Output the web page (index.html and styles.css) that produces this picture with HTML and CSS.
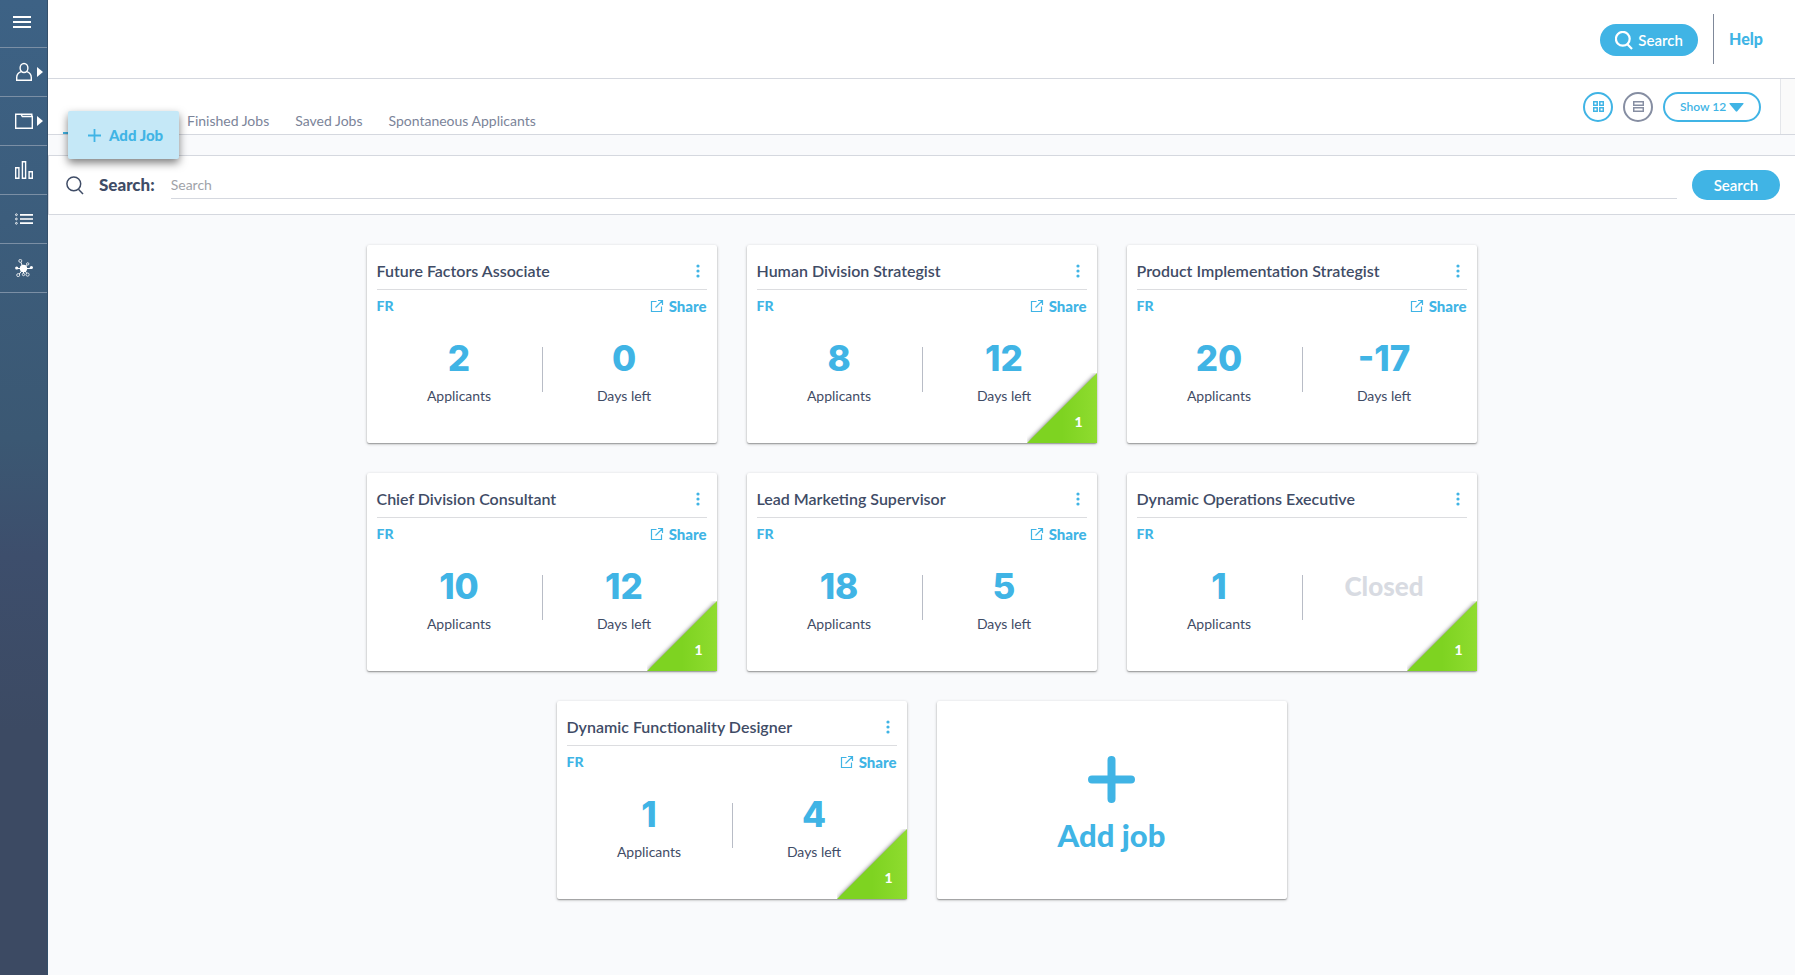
FILE: index.html
```html
<!DOCTYPE html>
<html lang="en">
<head>
<meta charset="utf-8">
<title>Jobs</title>
<link rel="stylesheet" href="styles.css">
</head>
<body>
<svg class="sprite" aria-hidden="true">
  <defs><linearGradient id="green"><stop offset="0" stop-color="#7ed321"/><stop offset="0.5" stop-color="#7ed321"/><stop offset="1" stop-color="#8fdc2f"/></linearGradient></defs>
  <symbol id="i-search" viewBox="0 0 18 19"><circle cx="7.8" cy="7.8" r="6.9"/><path d="M12.4 13.2L17 18"/></symbol>
  <symbol id="i-share" viewBox="0 0 14 14"><path d="M6.500 2.500H1.500V12.500H11.500V7.500M5.500 8.500L12.500 1.500M8 1.500H12.500V6"/></symbol>
  <symbol id="i-dots" viewBox="0 0 4 14"><circle cx="2" cy="2" r="1.600"/><circle cx="2" cy="7" r="1.600"/><circle cx="2" cy="12" r="1.600"/></symbol>
  <symbol id="i-corner" viewBox="0 0 70 70"><path d="M70 0V70H0Z" fill="url(#green)"/></symbol>
</svg>

<div class="app">
  <nav class="side" aria-label="Main">
    <button class="side-item side-menu" aria-label="Menu"><svg width="18" height="12" viewBox="0 0 18 12"><path d="M0 1H18M0 6H18M0 11H18" stroke="#fff" stroke-width="2"/></svg></button>
    <a class="side-item" href="#people" aria-label="People"><svg width="28" height="20" viewBox="0 0 28 20"><g fill="none" stroke="#fff" stroke-width="1.400"><ellipse cx="9" cy="6" rx="3.900" ry="4.500"/><path d="M6.300 9.600C3.400 10.600 1.700 12.500 1.700 15.500V18.300H16.300V15.500C16.300 12.500 14.600 10.600 11.700 9.600"/></g><path d="M22 5L28 10L22 15Z" fill="#fff"/></svg></a>
    <a class="side-item" href="#jobs" aria-label="Jobs"><svg width="28" height="20" viewBox="0 0 28 20"><g fill="none" stroke="#fff" stroke-width="1.400"><path d="M.7 3.200H6L7.300 5.500H17.300V17.300H.7ZM6.500 3.200H16.800V5.500"/></g><path d="M22 5L28 10L22 15Z" fill="#fff"/></svg></a>
    <a class="side-item" href="#stats" aria-label="Statistics"><svg width="18" height="18" viewBox="0 0 18 18"><path d="M.7 6.700H3.900V17.300H.7ZM7.400.7H10.600V17.300H7.400ZM14.100 10.700H17.300V17.300H14.100Z" fill="none" stroke="#fff" stroke-width="1.400"/></svg></a>
    <a class="side-item" href="#list" aria-label="Lists"><svg width="18" height="12" viewBox="0 0 18 12"><path d="M5 1.800H18M5 6H18M5 10.200H18" stroke="#fff" stroke-width="1.700"/><g fill="none" stroke="#fff" stroke-width=".9"><circle cx="1.400" cy="1.700" r=".9"/><circle cx="1.400" cy="6" r=".9"/><circle cx="1.400" cy="10.300" r=".9"/></g></svg></a>
    <a class="side-item" href="#network" aria-label="Network"><svg width="18" height="18" viewBox="0 0 18 18"><path d="M8.500 9.500L5.500 2.500M8.500 9.500L12.500 5M8.500 9.500H16.500M8.500 9.500H1.500M8.500 9.500L3.500 16M8.500 9.500V15M8.500 9.500L12.500 15.500" stroke="#fff"/><circle cx="8.500" cy="9.500" r="3.700" fill="#fff"/><circle cx="1.700" cy="9" r="1.600" fill="#fff"/><circle cx="16.400" cy="8.500" r="1.600" fill="#fff"/><g fill="#3d5e7d" stroke="#fff" stroke-width=".8"><circle cx="5.300" cy="1.900" r="1.500"/><circle cx="12.700" cy="4.900" r="1.200"/><circle cx="3.200" cy="16.100" r="1.500"/><circle cx="8.500" cy="15.500" r="1.200"/><circle cx="12.600" cy="15.600" r="1.600"/></g></svg></a>
  </nav>

  <main class="main">
    <header class="top">
      <button class="pill top-search"><svg class="line bold" width="18" height="19"><use href="#i-search"/></svg>Search</button>
      <a class="help" href="#help">Help</a>
    </header>

    <div class="toolbar-row">
      <div class="toolbar">
        <div class="tabs">
          <span class="tab current"></span>
          <a class="tab" href="#finished">Finished Jobs</a>
          <a class="tab" href="#saved">Saved Jobs</a>
          <a class="tab" href="#spontaneous">Spontaneous Applicants</a>
        </div>
        <div class="views">
          <button class="round" aria-label="Grid view"><svg width="11" height="11" viewBox="0 0 11 11"><path d="M.7.7H4.200V4.200H.7ZM6.800.7H10.300V4.200H6.800ZM.7 6.800H4.200V10.300H.7ZM6.800 6.800H10.300V10.300H6.800Z"/></svg></button>
          <button class="round muted" aria-label="List view"><svg width="11" height="11" viewBox="0 0 11 11"><path d="M.7.7H10.300V4.200H.7ZM.7 6.800H10.300V10.300H.7Z"/></svg></button>
          <div class="show"><select aria-label="Jobs per page"><option>Show 12</option></select><svg width="15" height="9" viewBox="0 0 15 9"><path d="M1 0H14Q15 0 14.400 1L8.300 8.300Q7.500 9 6.700 8.300L.6 1Q0 0 1 0Z" fill="#40b4e5"/></svg></div>
        </div>
      </div>
    </div>

    <form class="filter">
      <svg class="line" width="18" height="19"><use href="#i-search"/></svg>
      <label for="q">Search:</label>
      <input id="q" type="text" placeholder="Search">
      <button class="pill" type="button">Search</button>
    </form>

    <section class="cards">
      <article class="card">
        <div class="card-head"><h2>Future Factors Associate</h2><button class="dots" aria-label="Options"><svg width="4" height="14"><use href="#i-dots"/></svg></button></div>
        <div class="meta"><span>FR</span><a class="share" href="#share"><svg width="14" height="14"><use href="#i-share"/></svg>Share</a></div>
        <div class="stats"><div class="stat"><strong>2</strong>Applicants</div><div class="stat"><strong>0</strong>Days left</div></div>
      </article>
      <article class="card">
        <div class="card-head"><h2>Human Division Strategist</h2><button class="dots" aria-label="Options"><svg width="4" height="14"><use href="#i-dots"/></svg></button></div>
        <div class="meta"><span>FR</span><a class="share" href="#share"><svg width="14" height="14"><use href="#i-share"/></svg>Share</a></div>
        <div class="stats"><div class="stat"><strong>8</strong>Applicants</div><div class="stat"><strong>12</strong>Days left</div></div>
        <div class="corner"><svg width="70" height="70"><use href="#i-corner"/></svg><span>1</span></div>
      </article>
      <article class="card">
        <div class="card-head"><h2>Product Implementation Strategist</h2><button class="dots" aria-label="Options"><svg width="4" height="14"><use href="#i-dots"/></svg></button></div>
        <div class="meta"><span>FR</span><a class="share" href="#share"><svg width="14" height="14"><use href="#i-share"/></svg>Share</a></div>
        <div class="stats"><div class="stat"><strong>20</strong>Applicants</div><div class="stat"><strong>-17</strong>Days left</div></div>
      </article>
      <article class="card">
        <div class="card-head"><h2>Chief Division Consultant</h2><button class="dots" aria-label="Options"><svg width="4" height="14"><use href="#i-dots"/></svg></button></div>
        <div class="meta"><span>FR</span><a class="share" href="#share"><svg width="14" height="14"><use href="#i-share"/></svg>Share</a></div>
        <div class="stats"><div class="stat"><strong>10</strong>Applicants</div><div class="stat"><strong>12</strong>Days left</div></div>
        <div class="corner"><svg width="70" height="70"><use href="#i-corner"/></svg><span>1</span></div>
      </article>
      <article class="card">
        <div class="card-head"><h2>Lead Marketing Supervisor</h2><button class="dots" aria-label="Options"><svg width="4" height="14"><use href="#i-dots"/></svg></button></div>
        <div class="meta"><span>FR</span><a class="share" href="#share"><svg width="14" height="14"><use href="#i-share"/></svg>Share</a></div>
        <div class="stats"><div class="stat"><strong>18</strong>Applicants</div><div class="stat"><strong>5</strong>Days left</div></div>
      </article>
      <article class="card">
        <div class="card-head"><h2>Dynamic Operations Executive</h2><button class="dots" aria-label="Options"><svg width="4" height="14"><use href="#i-dots"/></svg></button></div>
        <div class="meta"><span>FR</span></div>
        <div class="stats"><div class="stat"><strong>1</strong>Applicants</div><div class="stat"><strong class="closed">Closed</strong></div></div>
        <div class="corner"><svg width="70" height="70"><use href="#i-corner"/></svg><span>1</span></div>
      </article>
      <article class="card">
        <div class="card-head"><h2>Dynamic Functionality Designer</h2><button class="dots" aria-label="Options"><svg width="4" height="14"><use href="#i-dots"/></svg></button></div>
        <div class="meta"><span>FR</span><a class="share" href="#share"><svg width="14" height="14"><use href="#i-share"/></svg>Share</a></div>
        <div class="stats"><div class="stat"><strong>1</strong>Applicants</div><div class="stat"><strong>4</strong>Days left</div></div>
        <div class="corner"><svg width="70" height="70"><use href="#i-corner"/></svg><span>1</span></div>
      </article>
      <button class="card add"><svg width="47" height="47" viewBox="0 0 47 47"><path d="M23.500 4V43M4 23.500H43" stroke="#40b4e5" stroke-width="8" stroke-linecap="round"/></svg>Add job</button>
    </section>
  </main>

  <a class="flyout" href="#add"><svg width="13" height="13" viewBox="0 0 13 13"><path d="M6.500 0V13M0 6.500H13" stroke="#40b4e5" stroke-width="1.800"/></svg>Add Job</a>
</div>
</body>
</html>
```
FILE: styles.css
```css
* { box-sizing: border-box; }
body {
  margin: 0;
  background: #f9fafc;
  color: #3f4c66;
  font: 14px/20px Lato, "Open Sans", sans-serif;
}
button, input, select { font: inherit; color: inherit; border: 0; background: none; padding: 0; margin: 0; }
a { color: inherit; text-decoration: none; }
svg { display: block; flex: none; }
.sprite { position: absolute; width: 0; height: 0; }
.line { fill: none; stroke: #3f4c66; stroke-width: 1.5; }
.line.bold { stroke: #fff; stroke-width: 2.2; }

.app { display: flex; min-height: 100vh; position: relative; }
.side {
  width: 48px;
  flex: none;
  background: linear-gradient(#3d6285 0, #3b5873 45%, #3d4e6c 57%, #3c4a63 75%);
  border-right: 1px solid #34506b;
}
.side-item {
  display: flex;
  align-items: center;
  width: 100%;
  height: 49px;
  padding-left: 15px;
  border-bottom: 1px solid #7b8fa5;
}
.side-menu { height: 48px; padding: 0 0 4px 13px; }
.main { flex: 1; min-width: 0; }

.top {
  height: 79px;
  display: flex;
  justify-content: flex-end;
  align-items: center;
  padding-right: 32px;
  background: #fff;
  border-bottom: 1px solid #d5d8df;
}
.pill {
  display: flex;
  align-items: center;
  justify-content: center;
  height: 30px;
  width: 88px;
  border-radius: 16px;
  background: #40b4e5;
  color: #fff;
  font-size: 15px;
  font-weight: 600;
}
.top-search { width: 98px; height: 32px; margin-top: 2px; gap: 5px; }
.help {
  margin-left: 15px;
  padding-left: 15px;
  line-height: 50px;
  border-left: 1px solid #7f8899;
  color: #40b4e5;
  font-size: 16px;
  font-weight: 900;
}

.toolbar-row {
  padding-right: 14px;
  background: #fafafa;
  border-bottom: 1px solid #d5d8df;
}
.toolbar {
  display: flex;
  justify-content: space-between;
  height: 55px;
  padding: 0 19px 0 15px;
  background: #fff;
  border-right: 1px solid #e4e6ea;
}
.tabs { display: flex; gap: 26px; align-items: flex-end; color: #7b8499; }
.tab { padding-bottom: 3px; }
.tab.current { width: 98px; height: 2px; padding: 0; background: #40b4e5; }
.views { display: flex; align-items: center; gap: 10px; }
.round {
  width: 30px;
  height: 30px;
  display: flex;
  align-items: center;
  justify-content: center;
  border: 2px solid #40b4e5;
  border-radius: 50%;
  color: #40b4e5;
}
.round.muted { border-color: #868ea2; color: #868ea2; }
.round svg { fill: none; stroke: currentColor; stroke-width: 1.5; }
.show {
  position: relative;
  width: 98px;
  height: 30px;
  border: 2px solid #40b4e5;
  border-radius: 15px;
  color: #40b4e5;
}
.show select { appearance: none; width: 100%; height: 100%; padding-left: 15px; font-size: 12px; font-weight: 600; outline: 0; }
.show svg { position: absolute; right: 15px; top: 9px; pointer-events: none; }

.filter {
  display: flex;
  align-items: center;
  height: 60px;
  margin-top: 20px;
  padding: 0 15px 0 17px;
  background: #fff;
  border: 1px solid #d5d8df;
  border-right: 0;
}
.filter label { margin: 0 16px 0 15px; font-size: 17px; font-weight: 900; }
.filter input {
  flex: 1;
  min-width: 0;
  height: 28px;
  margin-right: 15px;
  border-bottom: 1px solid #d5d8df;
  outline: 0;
}
.filter input::placeholder { color: #a0a3a9; opacity: 1; }

.cards {
  display: flex;
  flex-wrap: wrap;
  justify-content: center;
  gap: 30px;
  max-width: 1201px;
  margin: 0 auto;
  padding: 30px 0;
}
.card {
  position: relative;
  width: 350px;
  height: 198px;
  padding: 10px;
  background: #fff;
  border-radius: 2px;
  box-shadow: 0 1px 3px rgba(0, 0, 0, .3), 0 1px 1px rgba(0, 0, 0, .2);
}
.card-head {
  display: flex;
  align-items: center;
  justify-content: space-between;
  height: 35px;
  padding-bottom: 2px;
  border-bottom: 1px solid #dcdde0;
}
h2 { margin: 0; font-size: 16px; line-height: 24px; font-weight: 600; }
.dots { padding: 0 7px; fill: #40b4e5; }
.meta {
  display: flex;
  align-items: center;
  justify-content: space-between;
  height: 32px;
  color: #40b4e5;
  font-weight: 900;
}
.share { display: flex; align-items: center; gap: 5px; font-size: 15px; }
.share svg { fill: none; stroke: #40b4e5; stroke-width: 1.2; }
.stats { display: flex; padding-top: 16px; }
.stat { flex: 1; display: flex; flex-direction: column; align-items: center; }
.stat strong {
  width: 100%;
  height: 48px;
  color: #40b4e5;
  font: 800 35px/40px Inter, sans-serif;
  text-align: center;
}
.stat + .stat {
  background: linear-gradient(#b8bcc6, #b8bcc6) no-repeat 0 9px / 1px 45px;
}
.stat strong.closed { color: #d8dbe2; font: 900 26px/40px Lato, sans-serif; }
.corner { position: absolute; right: 0; bottom: 0; overflow: hidden; }
.corner svg { overflow: visible; filter: drop-shadow(0 0 2px rgba(0, 0, 0, .6)); }
.corner span { position: absolute; right: 14px; bottom: 11px; color: #fff; font-weight: 900; }
.add {
  display: flex;
  flex-direction: column;
  align-items: center;
  justify-content: center;
  gap: 14px;
  padding-top: 18px;
  color: #40b4e5;
  font-size: 31px;
  line-height: 36px;
  font-weight: 900;
}

.flyout {
  position: absolute;
  left: 68px;
  top: 111px;
  display: flex;
  align-items: center;
  gap: 8px;
  height: 48px;
  padding: 0 16px 0 20px;
  background: #c5e8f7;
  border-radius: 2px;
  box-shadow: 0 4px 8px rgba(0, 0, 0, .5);
  color: #40b4e5;
  font-size: 15px;
  font-weight: 900;
}
```
